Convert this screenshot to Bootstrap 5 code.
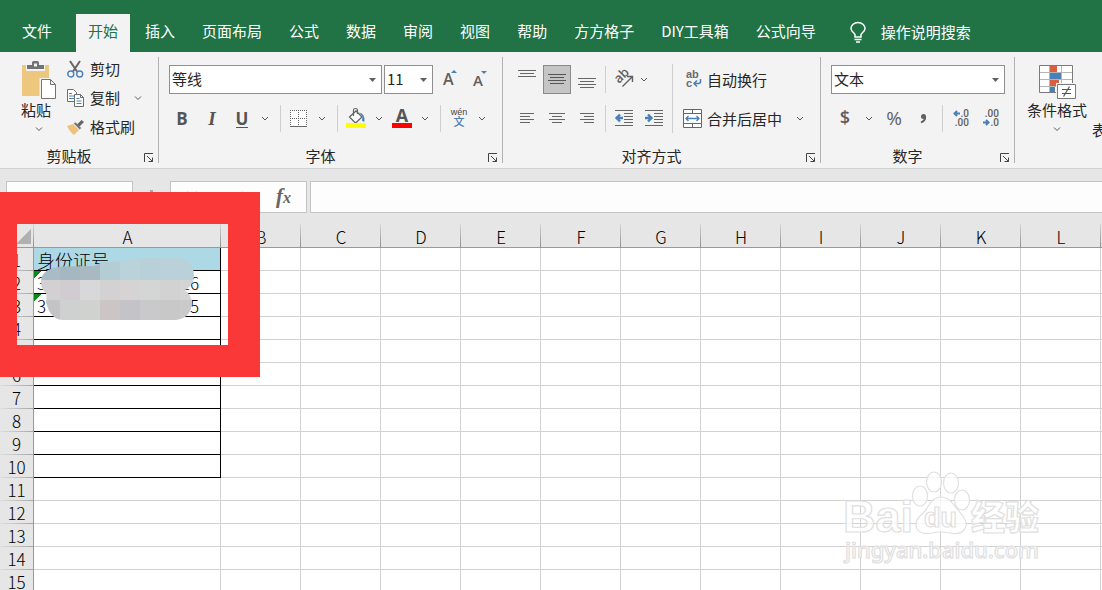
<!DOCTYPE html>
<html lang="zh-CN">
<head>
<meta charset="utf-8">
<meta name="viewport" content="width=device-width, initial-scale=1">
<title>工作簿</title>
<link href="https://cdn.jsdelivr.net/npm/bootstrap@5.3.0/dist/css/bootstrap.min.css" rel="stylesheet">
<style>
  body { font-family: "Noto Sans CJK SC", "Noto Sans", sans-serif; font-size: 15px; line-height: 20px; color: #262626; background: #e6e6e6; }
  button { font: inherit; color: inherit; background: none; border: 0; padding: 0; }
  svg { display: block; flex: none; overflow: visible; }

  /* tab strip */
  .tabstrip { background: #217346; height: 52px; padding: 14px 0 0 10px; gap: 3px; }
  .tabstrip .nav-link { color: #fff; padding: 7px 12px 0; height: 38px; white-space: nowrap; border-radius: 0; }
  .tabstrip .nav-link.active { background: #f3f3f3; color: #217346; }
  .file-tab { margin-right: 9px; }
  .tell-me { color: #fff; gap: 15px; margin-left: 19px; height: 36px; }

  /* ribbon */
  .ribbon { background: #f3f3f3; border-bottom: 1px solid #d2d2d2; height: 117px; padding-top: 5px; }
  .rgroup { height: 106px; border-right: 1px solid #b1b1b1; }
  .rgroup:last-child { border-right: 0; }
  .rbody { height: 89px; }
  .rbody-clip { padding-left: 21px; }
  .rbody-style { padding-left: 8px; gap: 5px; }
  .rfoot { height: 17px; margin-top: auto; }
  .launcher { width: 20px; padding: 7px 4px 0 6px; align-self: flex-start; }
  .rrows { padding: 8px 9px 0 10px; row-gap: 10px; }
  .rrows-wrap { padding-left: 6px; padding-right: 16px; }
  .rrow { height: 29px; gap: 2px; }
  .rrow-wide { gap: 4px; }
  .tool { width: 28px; height: 29px; }
  .tool-sm { width: 26px; height: 29px; }
  .tool.pressed { background: #c5c5c5; border: 1px solid #8a8a8a; }
  .drop { width: 8px; height: 29px; }
  .drop-md { width: 12px; }
  .drop-lg { width: 17px; }
  .drop-merge { margin-left: 12px; }
  .drop-copy { margin-left: 14px; }
  .vline { width: 1px; height: 27px; background: #cfcfcf; margin: 0 2px; }
  .rrow-wide .vline { margin: 0 1px 0 5px; }
  .vline-tall { height: 69px; margin: 7px 4px 0 4px; }
  .line-btn { height: 24px; gap: 6px; }
  .line-stack { gap: 5px; margin-left: 10px; padding-right: 16px; }
  .big-btn { padding-top: 4px; }
  .combo { height: 29px; border: 1px solid #8f8f8f; border-radius: 0; padding: 0 16px 2px 2px; font-size: 15px; line-height: 20px; color: #262626;
    background: #fff url("data:image/svg+xml,%3Csvg xmlns='http://www.w3.org/2000/svg' width='7' height='4'%3E%3Cpath d='M0 0h7L3.500 4z' fill='%23606060'/%3E%3C/svg%3E") no-repeat right 5px center; background-size: 7px 4px; }
  .combo-font { width: 213px; }
  .combo-size { width: 49px; }
  .combo-number { width: 174px; }
  .glyph { font-family: "Open Sans", sans-serif; font-weight: 700; font-size: 17px; color: #555; }
  .glyph-serif { font-family: "Liberation Serif", serif; font-size: 19px; font-style: italic; }
  .glyph-u { border-bottom: 1px solid #555; line-height: 15px; padding-bottom: 1px; }

  /* formula bar */
  .fbar { padding: 12px 0 0 6px; }
  .fbox { height: 32px; background: #fdfdfd; border: 1px solid #c3c3c3; border-radius: 0; padding: 0 4px; }
  .name-box { width: 127px; }
  .fx-box { width: 137px; padding: 0 15px; margin-right: 3px; }
  .fx { font-family: "Liberation Serif", serif; font-style: italic; font-weight: 700; font-size: 21px; color: #666; }
  .fx small { font-size: 16px; }
  .fgap { width: 37px; }
  .formula-input { border-right: 0; min-width: 0; }

  /* grid */
  .sheet { table-layout: fixed; width: 1261px; border-collapse: separate; border-spacing: 0; font-size: 17px; font-weight: 300; line-height: 20px; color: #000; }
  .sheet th { font-weight: 300; text-align: center; background: #e6e6e6; padding: 0; }
  .sheet thead th { height: 35px; padding-top: 13px; border-bottom: 1px solid #999;
    background: #e6e6e6 linear-gradient(#d6d6d6, #8e8e8e) no-repeat right bottom / 1px 23px; }
  .sheet thead th.corner { padding: 0 3px 3px 0; vertical-align: bottom; }
  .sheet tbody th { height: 23px; border-right: 1px solid #999;
    background: #e6e6e6 linear-gradient(90deg, #dedede, #a6a6a6) no-repeat left bottom / 100% 1px; }
  .sheet td { height: 23px; padding: 2px 0 0 3px; background: #fff; border-right: 1px solid #d2d2d2; border-bottom: 1px solid #d2d2d2; white-space: nowrap; }
  .sheet td.boxed { border-color: #000; }
  .sheet td.head-cell { background: #add8e6; font-size: 18px; }
  .sheet td.text-num { background: linear-gradient(135deg, #0a8a1a 5px, #fff 5px); }
  .col-row { width: 34px; }
  .col-a { width: 187px; }
  .col-std { width: 80px; }
  .id-num { width: 162px; }

  /* layers over the sheet */
  .callout-frame { left: 0; top: 23px; width: 260px; height: 185px; border: 32px solid #fb3838; border-left-width: 17px; pointer-events: none; }
  .mosaic { left: 40px; top: 89px; }
  .watermark { right: 56px; bottom: 20px; }
</style>
</head>
<body>
<div class="d-flex flex-column vh-100 overflow-hidden">

  <nav class="nav tabstrip flex-nowrap overflow-hidden flex-shrink-0">
    <a class="nav-link file-tab" href="#">文件</a>
    <a class="nav-link active" href="#">开始</a>
    <a class="nav-link" href="#">插入</a>
    <a class="nav-link" href="#">页面布局</a>
    <a class="nav-link" href="#">公式</a>
    <a class="nav-link" href="#">数据</a>
    <a class="nav-link" href="#">审阅</a>
    <a class="nav-link" href="#">视图</a>
    <a class="nav-link" href="#">帮助</a>
    <a class="nav-link" href="#">方方格子</a>
    <a class="nav-link" href="#">DIY工具箱</a>
    <a class="nav-link" href="#">公式向导</a>
    <button class="tell-me d-flex align-items-center text-nowrap" type="button">
      <svg width="16" height="21" fill="none" stroke="#fff" stroke-width="1.500"><path d="M5 15v-2.500C4.500 11 1 9.500 1 6.500a6.800 5.800 0 0 1 14 0C15 9.500 11.500 11 11 12.500V15zM4.500 17.500h7M6 20h4"/></svg>
      操作说明搜索
    </button>
  </nav>

  <div class="ribbon d-flex overflow-hidden flex-shrink-0">

    <section class="rgroup d-flex flex-column flex-shrink-0" aria-label="剪贴板">
      <div class="rbody rbody-clip d-flex">
        <button class="big-btn d-flex flex-column align-items-start text-nowrap" type="button">
          <svg width="36" height="39">
            <path d="M1 4h27v31H1z" fill="#eec77f"/>
            <path d="M5 3h5V0h9v3h5v7H5z" fill="#f3f3f3"/>
            <path d="M6 4h5V1.500Q11 0 12.500 0h4Q18 0 18 1.500V4h5v4H6z" fill="#737373"/>
            <path d="M13 2.500h3v3h-3z" fill="#f3f3f3"/>
            <path d="M18.500 17h11l6.500 6v16H18.500z" fill="#f3f3f3"/>
            <path d="M20.500 18.500h9l5 5v14h-14zM29.500 18.500v5h5" fill="#fff" stroke="#737373"/>
          </svg>
          粘贴
          <svg class="align-self-center" width="8" height="18" fill="none" stroke="#555"><path d="M1 7.500l3 3 3-3"/></svg>
        </button>
        <div class="line-stack d-flex flex-column">
          <button class="line-btn d-flex align-items-center" type="button">
            <svg width="17" height="18" fill="none"><path d="M3 1l7 10.500M13 1L6 11.500" stroke="#666" stroke-width="2"/><circle cx="3.800" cy="14" r="3" stroke="#4a80b8" stroke-width="1.400"/><circle cx="12.700" cy="14" r="3" stroke="#4a80b8" stroke-width="1.400"/></svg>
            剪切
          </button>
          <div class="d-flex">
            <button class="line-btn d-flex align-items-center" type="button">
              <svg width="17" height="18" fill="#fff" stroke="#6d6d6d"><path d="M.5.500h6l3 3v9h-9z"/><path d="M2 4.500h3M2 7h5M2 9.500h5" stroke="#4a80b8"/><path d="M7.500 5.500h6l3 3v9h-9zM13.500 5.500v3h3"/><path d="M9.500 9.500h3M9.500 12h5M9.500 14.500h5" stroke="#4a80b8"/></svg>
              复制
            </button>
            <button class="drop-copy d-flex align-items-center" type="button" aria-label="复制选项"><svg width="8" height="8" fill="none" stroke="#555"><path d="M1 2.500l3 3 3-3"/></svg></button>
          </div>
          <button class="line-btn d-flex align-items-center" type="button">
            <svg width="17" height="16"><path d="M0 7l6-2 6 6-5 5C4 14 2 11 0 7z" fill="#edc27a"/><path d="M6.500 4.500l2-1.500 6 6-1.800 1.800z" fill="#737373" stroke="#f3f3f3" stroke-width=".6"/><path d="M10 5.500L14.500 1 17 3l-4.500 4.500z" fill="#666"/></svg>
            格式刷
          </button>
        </div>
      </div>
      <div class="rfoot d-flex"><span class="flex-fill text-center">剪贴板</span><button class="launcher" type="button" aria-label="剪贴板设置"><svg width="10" height="10" fill="none" stroke="#444"><path d="M.5 9V.5H9M3 3l5.500 5.500M8.500 4.500v4h-4"/></svg></button></div>
    </section>

    <section class="rgroup d-flex flex-column flex-shrink-0" aria-label="字体">
      <div class="rbody rrows d-flex flex-column">
        <div class="rrow d-flex align-items-center">
          <select class="form-select combo combo-font" aria-label="字体"><option>等线</option></select>
          <select class="form-select combo combo-size" aria-label="字号"><option>11</option></select>
          <button class="tool d-flex align-items-center justify-content-center" type="button" aria-label="增大字号"><svg width="14" height="21"><text x="1" y="16" font-family="Open Sans" font-weight="600" font-size="16" fill="#606060">A</text><path d="M9 4l3-3 3 3z" fill="#4a80b8"/></svg></button>
          <button class="tool d-flex align-items-center justify-content-center" type="button" aria-label="减小字号"><svg width="14" height="21"><text x="1" y="17" font-family="Open Sans" font-weight="600" font-size="15" fill="#606060">A</text><path d="M9 2h6l-3 3z" fill="#4a80b8"/></svg></button>
        </div>
        <div class="rrow rrow-wide d-flex align-items-center">
          <button class="tool-sm glyph" type="button">B</button>
          <button class="tool-sm glyph glyph-serif" type="button">I</button>
          <button class="tool-sm glyph" type="button"><span class="glyph-u d-inline-block">U</span></button>
          <button class="drop drop-md d-flex align-items-center justify-content-center" type="button" aria-label="下划线选项"><svg width="8" height="7" fill="none" stroke="#555"><path d="M1 2l3 3 3-3"/></svg></button>
          <span class="vline"></span>
          <button class="tool-sm d-flex align-items-center justify-content-center" type="button" aria-label="边框"><svg width="18" height="17" fill="#fff" stroke="#666"><path d="M0 0h17v17H0z" stroke="none"/><path d="M0 .5h17M0 8.500h17M.5 0v17M8.500 0v17M16.500 0v17" stroke-dasharray="1 1"/><path d="M0 16.500h17"/></svg></button>
          <button class="drop drop-md d-flex align-items-center justify-content-center" type="button" aria-label="边框选项"><svg width="8" height="7" fill="none" stroke="#555"><path d="M1 2l3 3 3-3"/></svg></button>
          <span class="vline"></span>
          <button class="tool-sm d-flex align-items-center justify-content-center" type="button" aria-label="填充颜色"><svg width="20" height="21"><path d="M3.500 9L10 3l6 6-6.500 6z" fill="#fff" stroke="#666" stroke-width="1.300"/><path d="M7.500 8V2q0-1.500 2-1.500t2 1.500v4" fill="none" stroke="#666" stroke-width="1.200"/><path d="M13 4.500q6 1 5.500 9-1.500.5-2.500-1l.5-4z" fill="#4a80b8"/><path d="M0 15h20v5H0z" fill="#ff0"/></svg></button>
          <button class="drop drop-md d-flex align-items-center justify-content-center" type="button" aria-label="填充颜色选项"><svg width="8" height="7" fill="none" stroke="#555"><path d="M1 2l3 3 3-3"/></svg></button>
          <button class="tool-sm d-flex align-items-center justify-content-center" type="button" aria-label="字体颜色"><svg width="20" height="21"><text x="10" y="14" text-anchor="middle" font-family="Open Sans" font-weight="700" font-size="18" fill="#555">A</text><path d="M0 15h20v5H0z" fill="#f00"/></svg></button>
          <button class="drop drop-md d-flex align-items-center justify-content-center" type="button" aria-label="字体颜色选项"><svg width="8" height="7" fill="none" stroke="#555"><path d="M1 2l3 3 3-3"/></svg></button>
          <span class="vline"></span>
          <button class="tool-sm d-flex align-items-center justify-content-center" type="button" aria-label="拼音"><svg width="18" height="21"><text x="9" y="7" text-anchor="middle" font-family="Liberation Sans" font-size="9" fill="#444">wén</text><text x="9" y="18" text-anchor="middle" font-family="Noto Sans CJK SC" font-weight="500" font-size="11" fill="#4a80b8">文</text></svg></button>
          <button class="drop drop-md d-flex align-items-center justify-content-center" type="button" aria-label="拼音选项"><svg width="8" height="7" fill="none" stroke="#555"><path d="M1 2l3 3 3-3"/></svg></button>
        </div>
      </div>
      <div class="rfoot d-flex"><span class="flex-fill text-center">字体</span><button class="launcher" type="button" aria-label="字体设置"><svg width="10" height="10" fill="none" stroke="#444"><path d="M.5 9V.5H9M3 3l5.500 5.500M8.500 4.500v4h-4"/></svg></button></div>
    </section>

    <section class="rgroup d-flex flex-column flex-shrink-0" aria-label="对齐方式">
      <div class="rbody d-flex">
        <div class="rrows d-flex flex-column pe-0">
          <div class="rrow d-flex align-items-center">
            <button class="tool d-flex align-items-center justify-content-center" type="button" aria-label="顶端对齐"><svg width="18" height="21" stroke="#666"><path d="M0 1.500h18M2 4.500h14M0 7.500h18"/></svg></button>
            <button class="tool pressed d-flex align-items-center justify-content-center" type="button" aria-label="垂直居中"><svg width="18" height="21" stroke="#555"><path d="M0 5.500h18M2 8.500h14M0 11.500h18M2 14.500h14"/></svg></button>
            <button class="tool d-flex align-items-center justify-content-center" type="button" aria-label="底端对齐"><svg width="18" height="21" stroke="#666"><path d="M0 9.500h18M2 12.500h14M0 15.500h18M2 18.500h14"/></svg></button>
            <span class="vline"></span>
            <button class="tool d-flex align-items-center justify-content-center" type="button" aria-label="方向"><svg width="20" height="21"><text transform="translate(5 15) rotate(-45)" font-family="Open Sans" font-weight="600" font-size="13" fill="#606060">ab</text><path d="M8.500 17.500L18 8M13 7.500h5.500V13" fill="none" stroke="#606060" stroke-width="1.400"/></svg></button>
            <button class="drop d-flex align-items-center justify-content-center" type="button" aria-label="方向选项"><svg width="8" height="7" fill="none" stroke="#555"><path d="M1 2l3 3 3-3"/></svg></button>
          </div>
          <div class="rrow d-flex align-items-center">
            <button class="tool d-flex align-items-center justify-content-center" type="button" aria-label="左对齐"><svg width="14" height="11" stroke="#666"><path d="M0 .5h14M0 3.500h10M0 6.500h14M0 9.500h10"/></svg></button>
            <button class="tool d-flex align-items-center justify-content-center" type="button" aria-label="居中"><svg width="16" height="11" stroke="#666"><path d="M0 .5h16M3 3.500h10M0 6.500h16M3 9.500h10"/></svg></button>
            <button class="tool d-flex align-items-center justify-content-center" type="button" aria-label="右对齐"><svg width="14" height="11" stroke="#666"><path d="M0 .5h14M4 3.500h10M0 6.500h14M4 9.500h10"/></svg></button>
            <span class="vline"></span>
            <button class="tool d-flex align-items-center justify-content-center" type="button" aria-label="减少缩进量"><svg width="18" height="17" stroke="#666"><path d="M0 .5h18M9 3.500h9M9 6.500h9M9 9.500h9M9 12.500h9M0 15.500h18"/><path d="M8 8H1.500M5 4.500L1.500 8 5 11.500" fill="none" stroke="#4a80b8" stroke-width="2.400"/></svg></button>
            <button class="tool d-flex align-items-center justify-content-center" type="button" aria-label="增加缩进量"><svg width="18" height="17" stroke="#666"><path d="M0 .5h18M9 3.500h9M9 6.500h9M9 9.500h9M9 12.500h9M0 15.500h18"/><path d="M0 8h6.500M3 4.500L6.500 8 3 11.500" fill="none" stroke="#4a80b8" stroke-width="2.400"/></svg></button>
          </div>
        </div>
        <span class="vline vline-tall"></span>
        <div class="rrows rrows-wrap d-flex flex-column">
          <button class="rrow d-flex align-items-center gap-1 text-nowrap" type="button">
            <svg width="20" height="21"><text x="3" y="9" font-family="Liberation Sans" font-weight="700" font-size="11" fill="#6a6a6a">ab</text><text x="3" y="18" font-family="Liberation Sans" font-weight="700" font-size="11" fill="#6a6a6a">c</text><path d="M17.500 10v2.500q0 2-2 2h-4M14 11.500l-3 3 3 3" fill="none" stroke="#4a80b8" stroke-width="1.500"/></svg>
            自动换行
          </button>
          <div class="rrow d-flex align-items-center">
            <button class="d-flex align-items-center gap-1 text-nowrap" type="button">
              <svg width="20" height="19" fill="none" stroke="#666"><path d="M.5.500h18v18H.5z" fill="#fff"/><path d="M0 4.500h19M0 14.500h19M9.500 0v4M9.500 15v4"/><path d="M3 9.500h13M5.500 7L3 9.500 5.500 12M13.500 7L16 9.500 13.500 12" stroke="#4a80b8" stroke-width="1.400"/></svg>
              合并后居中
            </button>
            <button class="drop drop-merge d-flex align-items-center justify-content-center" type="button" aria-label="合并选项"><svg width="8" height="7" fill="none" stroke="#555"><path d="M1 2l3 3 3-3"/></svg></button>
          </div>
        </div>
      </div>
      <div class="rfoot d-flex"><span class="flex-fill text-center">对齐方式</span><button class="launcher" type="button" aria-label="对齐设置"><svg width="10" height="10" fill="none" stroke="#444"><path d="M.5 9V.5H9M3 3l5.500 5.500M8.500 4.500v4h-4"/></svg></button></div>
    </section>

    <section class="rgroup d-flex flex-column flex-shrink-0" aria-label="数字">
      <div class="rbody rrows d-flex flex-column">
        <select class="form-select combo combo-number" aria-label="数字格式"><option>文本</option></select>
        <div class="rrow d-flex align-items-center">
          <button class="tool d-flex align-items-center justify-content-center" type="button" aria-label="会计数字格式"><svg width="14" height="21"><text x="7" y="16" text-anchor="middle" font-family="Open Sans" font-weight="600" font-size="18" fill="#606060">$</text></svg></button>
          <button class="drop drop-lg d-flex align-items-center justify-content-center" type="button" aria-label="货币选项"><svg width="9" height="7" fill="none" stroke="#555"><path d="M1 2l3 3 3-3"/></svg></button>
          <button class="tool d-flex align-items-center justify-content-center" type="button" aria-label="百分比"><svg width="18" height="21"><text x="9" y="17" text-anchor="middle" font-family="Open Sans" font-size="19" fill="#606060">%</text></svg></button>
          <button class="tool d-flex align-items-center justify-content-center" type="button" aria-label="千位分隔"><svg width="8" height="13"><circle cx="3.500" cy="4.500" r="2.500" fill="#606060"/><path d="M5.200 4.500q.5 4-4.200 6" fill="none" stroke="#606060" stroke-width="1.800"/></svg></button>
          <span class="vline"></span>
          <button class="tool d-flex align-items-center justify-content-center" type="button" aria-label="增加小数位数"><svg width="16" height="21"><text x="16" y="9" text-anchor="end" font-family="Roboto" font-weight="500" font-size="10" fill="#606060">.0</text><text x="16" y="18" text-anchor="end" font-family="Roboto" font-weight="500" font-size="10" fill="#606060">.00</text><path d="M7 5.500H1.500M4 3L1.500 5.500 4 8" fill="none" stroke="#4a80b8" stroke-width="2"/></svg></button>
          <button class="tool d-flex align-items-center justify-content-center" type="button" aria-label="减少小数位数"><svg width="16" height="21"><text x="16" y="9" text-anchor="end" font-family="Roboto" font-weight="500" font-size="10" fill="#606060">.00</text><text x="16" y="18" text-anchor="end" font-family="Roboto" font-weight="500" font-size="10" fill="#606060">.0</text><path d="M0 14.500h5.500M3 12l2.500 2.500L3 17" fill="none" stroke="#4a80b8" stroke-width="2"/></svg></button>
        </div>
      </div>
      <div class="rfoot d-flex"><span class="flex-fill text-center">数字</span><button class="launcher" type="button" aria-label="数字设置"><svg width="10" height="10" fill="none" stroke="#444"><path d="M.5 9V.5H9M3 3l5.500 5.500M8.500 4.500v4h-4"/></svg></button></div>
    </section>

    <section class="rgroup d-flex flex-column flex-shrink-0" aria-label="样式">
      <div class="rbody rbody-style d-flex">
        <button class="big-btn d-flex flex-column align-items-center text-nowrap ps-1" type="button">
          <svg width="36" height="39">
            <path d="M.5 4.500h33v27H.5z" fill="#fff" stroke="#7a7a7a"/>
            <path d="M1 11.500h32M1 18.500h32M1 25.500h32M10.500 5v26M22.500 5v26" stroke="#b5b5b5"/>
            <path d="M11 5h7v6h-7zM11 19h9v6h-9z" fill="#d9603f"/><path d="M11 12h11v6H11zM11 26h5v5h-5z" fill="#4a80b8"/>
            <path d="M17 22h21v17H17z" fill="#f3f3f3"/><path d="M18.500 23.500h18v14h-18z" fill="#fff" stroke="#7a7a7a"/>
            <path d="M23 28.500h9M23 32.500h9M30.500 25.500l-6 10" stroke="#555" stroke-width="1.200"/>
          </svg>
          条件格式
          <svg width="8" height="18" fill="none" stroke="#555"><path d="M1 7.500l3 3 3-3"/></svg>
        </button>
        <button class="big-btn d-flex flex-column align-items-center text-nowrap" type="button">
          <svg width="34" height="39"><path d="M.5 4.500h33v27H.5zM0 11.500h34M0 18.500h34M11.500 4v28M22.500 4v28" fill="#fff" stroke="#7a7a7a"/></svg>
          <span>套用</span><span>表格格式</span>
        </button>
      </div>
    </section>
  </div>

  <main class="position-relative flex-fill overflow-hidden">
    <div class="fbar d-flex">
      <input class="fbox name-box" type="text" aria-label="名称框">
      <span class="fgap d-flex justify-content-center"><svg width="3" height="24" fill="#a8a8a8"><path d="M0 9h3v3H0zM0 15h3v3H0z"/></svg></span>
      <div class="fbox fx-box d-flex align-items-center justify-content-between">
        <button type="button" aria-label="取消"><svg width="12" height="12" fill="none" stroke="#b5b5b5" stroke-width="2"><path d="M1 1l10 10M11 1L1 11"/></svg></button>
        <button type="button" aria-label="输入"><svg width="14" height="12" fill="none" stroke="#b5b5b5" stroke-width="2"><path d="M1 6l4 5 8-10"/></svg></button>
        <button class="fx" type="button">f<small>x</small></button>
      </div>
      <input class="fbox formula-input flex-fill" type="text" aria-label="编辑栏">
    </div>

    <table class="sheet">
      <colgroup id="cols"><col class="col-row"><col class="col-a"></colgroup>
      <thead><tr id="letters"><th class="corner" aria-label="全选"><svg class="ms-auto" width="15" height="15"><path d="M15 0v15H0z" fill="#b0b0b0"/></svg></th></tr></thead>
      <tbody id="rows"></tbody>
    </table>

    <svg class="mosaic position-absolute" width="156" height="64" aria-hidden="true">
      <clipPath id="blob"><path d="M8 12Q14 9 22 8.500L54 8Q60 4 68 4Q80 4 92 1.500Q100 0 110 0H140Q154 3 154 18Q153 28 145 32Q152 38 152 45Q151 60 136 62H22Q10 61 6 44Q7 38 6 35Q1 32 1 24Q1 16 8 12z"/></clipPath>
      <g id="tiles" clip-path="url(#blob)"></g>
    </svg>

    <div class="callout-frame position-absolute"></div>

    <svg class="watermark position-absolute" width="204" height="100" fill="#fff" fill-opacity=".75" stroke="#e0e0e0" stroke-width="1.200" aria-label="百度经验">
      <text x="1" y="62" font-family="Liberation Sans" font-weight="700" font-size="45">Bai</text>
      <ellipse cx="78" cy="26" rx="7.500" ry="10"/><ellipse cx="92" cy="12" rx="7.500" ry="10"/><ellipse cx="109" cy="13" rx="7.500" ry="10"/><ellipse cx="120" cy="30" rx="7.500" ry="10"/>
      <path d="M99 27Q106 27 111 34Q116 40 121 46Q127 54 122 60Q118 65 108 63Q99 61 90 63Q79 65 75 59Q72 52 78 46Q83 42 87 35Q92 27 99 27z"/>
      <text x="82" y="57" font-family="Liberation Sans" font-weight="700" font-size="27">du</text>
      <text x="129" y="60" font-family="Noto Sans CJK SC" font-weight="900" font-size="34">经验</text>
      <text x="3" y="88" font-family="Noto Sans" font-size="22" font-weight="500">jingyan.baidu.com</text>
    </svg>
  </main>
</div>

<script src="https://cdn.jsdelivr.net/npm/bootstrap@5.3.0/dist/js/bootstrap.bundle.min.js"></script>
<script>
  const letters = 'ABCDEFGHIJKLM'.split('');
  const cells = {
    1: ['boxed head-cell', '身份证号'],
    2: ['boxed text-num', '<span class="id-num d-flex justify-content-between"><span>3</span><span>26</span></span>'],
    3: ['boxed text-num', '<span class="id-num d-flex justify-content-between"><span>3</span><span>5</span></span>']
  };
  document.getElementById('cols').insertAdjacentHTML('beforeend', '<col class="col-std">'.repeat(letters.length));
  document.getElementById('letters').insertAdjacentHTML('beforeend', letters.map(l => `<th scope="col">${l}</th>`).join(''));
  let html = '';
  for (let r = 1; r <= 15; r++) {
    const [cls, text] = cells[r] || [r <= 10 ? 'boxed' : '', ''];
    html += `<tr><th scope="row">${r}</th><td class="${cls}">${text}</td>${'<td></td>'.repeat(letters.length - 1)}</tr>`;
  }
  document.getElementById('rows').innerHTML = html;

  const tiles = [
    ['#a9bcc5', '#a4b8c1', '#a8b9c2', '#b4ccd4', '#bad2da', '#b8d0d8', '#bbd1da', '#bad1d9'],
    ['#d2d0d1', '#d1cccf', '#d8d8da', '#d4d1d2', '#d5d3d4', '#d4d6d6', '#d2d2d3', '#d4d4d4'],
    ['#c4c4c7', '#cfd1d1', '#d0d2d0', '#cbc5c6', '#c4c4c8', '#c9c9cb', '#c8c8c9', '#cacacb']
  ];
  document.getElementById('tiles').innerHTML = tiles.map((row, y) => row.map((c, x) =>
    `<rect x="${x * 20}" y="${y ? y * 20 + 2 : 0}" width="20" height="${y ? 20 : 22}" fill="${c}"/>`).join('')).join('');
</script>
</body>
</html>
